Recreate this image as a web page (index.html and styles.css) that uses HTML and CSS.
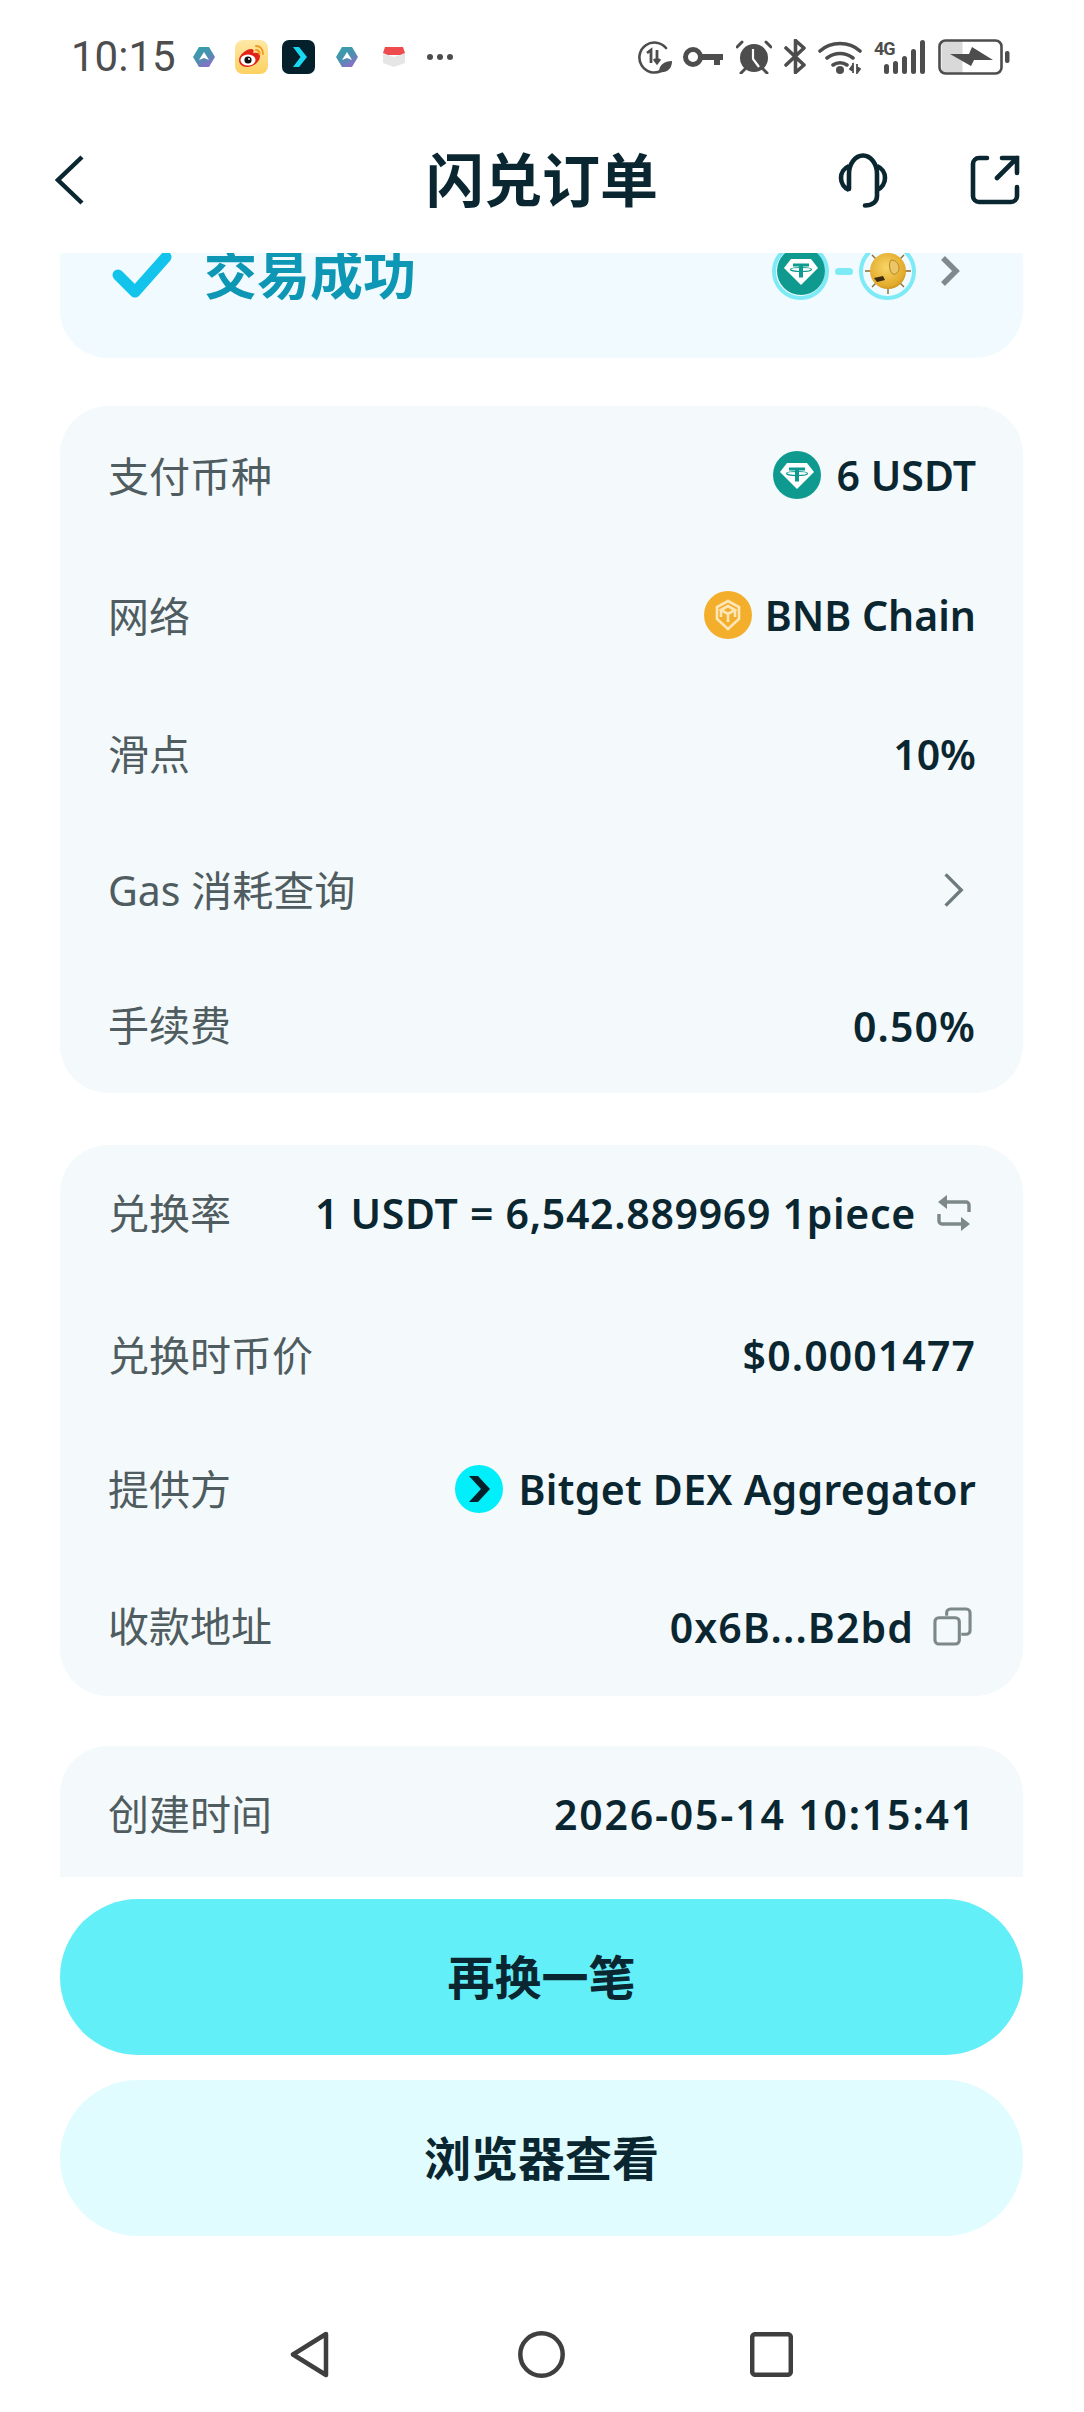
FILE: index.html
```html
<!DOCTYPE html>
<html lang="zh-CN">
<head>
    <meta charset="UTF-8">
    <meta name="viewport" content="width=device-width, initial-scale=1.0">
    <title>闪兑订单</title>
    <link rel="stylesheet" href="styles.css">
</head>
<body>

    <div class="app">

        <!-- Status bar -->
        <div class="status-bar">
            <span class="time">10:15</span>
            <svg class="s-hex" viewBox="0 0 22 20">
                <defs>
                    <linearGradient id="hexFill" x1="0" y1="0" x2="0.6" y2="1">
                        <stop offset="0" stop-color="#2fa3a8"/>
                        <stop offset="0.6" stop-color="#4d8fb0"/>
                        <stop offset="1" stop-color="#8b6fc8"/>
                    </linearGradient>
                </defs>
                <path d="M6 0h10l6 10-6 10H6L0 10z" fill="url(#hexFill)"/>
                <path d="M11 5l5 8-5-2-5 2z" fill="#fff"/>
            </svg>
            <svg class="s-app s-weibo" viewBox="0 0 33 34">
                <defs>
                    <linearGradient id="weiboBg" x1="0" y1="0" x2="0" y2="1">
                        <stop offset="0" stop-color="#ffe9a8"/>
                        <stop offset="1" stop-color="#fdd060"/>
                    </linearGradient>
                </defs>
                <rect width="33" height="34" rx="8" fill="url(#weiboBg)"/>
                <path d="M4 20c0-5 7-11 12-11 3 0 3 2 2 4 4-1 7 0 7 3 0 6-7 11-13 11-5 0-8-3-8-7z" fill="#e2231a"/>
                <ellipse cx="13" cy="20" rx="7.500" ry="5.500" fill="#fff"/>
                <circle cx="13" cy="20" r="3.600" fill="#111"/>
                <circle cx="14" cy="19" r="1" fill="#fff"/>
                <path d="M21 6c4 0 7 3 7 8M21 10c2 0 3.500 1.500 3.500 4" fill="none" stroke="#f29a1f" stroke-width="2" stroke-linecap="round"/>
            </svg>
            <svg class="s-app s-bitget" viewBox="0 0 33 34">
                <rect width="33" height="34" rx="7" fill="#04202b"/>
                <path d="M11 7h6l8 10-8 10h-6l7.500-10z" fill="#19d9f2"/>
            </svg>
            <svg class="s-hex s-hex-2" viewBox="0 0 22 20">
                <path d="M6 0h10l6 10-6 10H6L0 10z" fill="url(#hexFill)"/>
                <path d="M11 5l5 8-5-2-5 2z" fill="#fff"/>
            </svg>
            <svg class="s-box" viewBox="0 0 24 21">
                <path d="M1 7l11 4 11-4v10l-11 4-11-4z" fill="#e6e6e6"/>
                <path d="M3 1h18l2 6-5 2H6L1 7z" fill="#ee4b4f"/>
            </svg>
            <span class="s-dots"><i></i><i></i><i></i></span>

            <div class="status-right">
                <svg class="s-data" viewBox="0 0 35 34">
                    <path d="M29 8a15 15 0 1 0-5 23" fill="none" stroke="#4d4d4d" stroke-width="2.600" stroke-linecap="round"/>
                    <path d="M10 13l4-3v13M20 10v13M17 19l3 4 3-4" fill="none" stroke="#4d4d4d" stroke-width="2.800"/>
                    <path d="M22 32c0-7 5-11 13-11 0 8-5 12-13 11z" fill="#4d4d4d"/>
                </svg>
                <svg class="s-key" viewBox="0 0 40 20">
                    <circle cx="10" cy="10" r="7.500" fill="none" stroke="#4d4d4d" stroke-width="5"/>
                    <path d="M18 7h22v6h-3v5h-6v-5H18z" fill="#4d4d4d"/>
                </svg>
                <svg class="s-alarm" viewBox="0 0 36 34">
                    <circle cx="18" cy="18" r="14" fill="#4d4d4d"/>
                    <path d="M17 9v10l6 8" fill="none" stroke="#fff" stroke-width="2.200"/>
                    <path d="M1 7l5-5M35 7l-5-5M5 33l4-4M31 33l-4-4" stroke="#4d4d4d" stroke-width="3" stroke-linecap="round"/>
                </svg>
                <svg class="s-bt" viewBox="0 0 23 35">
                    <path d="M2 9l18 17-8.500 7.500V1.500L20 9 2 26" fill="none" stroke="#4d4d4d" stroke-width="3.600" stroke-linejoin="round" stroke-linecap="round"/>
                </svg>
                <svg class="s-wifi" viewBox="0 0 44 34">
                    <path d="M2 11c11-10 29-10 40 0M9 18c8-6 18-6 26 0M15 25c4-3 10-3 14 0" fill="none" stroke="#4d4d4d" stroke-width="3.600" stroke-linecap="round"/>
                    <circle cx="22" cy="30" r="4" fill="#4d4d4d"/>
                    <path d="M35 23v10M39 24v9M32 29l3-4v6zM42 29l-3 4v-6z" stroke="#4d4d4d" stroke-width="1.800" fill="#4d4d4d"/>
                </svg>
                <div class="s-signal">
                    <span class="s-4g">4G</span>
                    <i class="bar-1"></i><i class="bar-2"></i><i class="bar-3"></i><i class="bar-4"></i><i class="bar-5"></i>
                </div>
                <svg class="s-battery" viewBox="0 0 72 36">
                    <rect x="3.500" y="2" width="21" height="32" fill="#d9d9d9"/>
                    <rect x="1.500" y="1.500" width="62" height="33" rx="6" fill="none" stroke="#4d4d4d" stroke-width="2.600"/>
                    <path d="M12 15l19 0 3-7 21 13-19 0-3 6z" fill="#4d4d4d"/>
                    <rect x="67" y="12" width="4.500" height="12" rx="2" fill="#4d4d4d"/>
                </svg>
            </div>
        </div>

        <!-- Header -->
        <div class="header">
            <svg class="back-icon" viewBox="0 0 30 50">
                <path d="M27 2L3 25l24 23" fill="none" stroke="#0a2630" stroke-width="4.500"/>
            </svg>
            <h1 class="title">闪兑订单</h1>
            <svg class="head-icon" viewBox="0 0 54 55">
                <path d="M13 36V21a14 18.500 0 0 1 28 0v22c0 6-5 9.500-12 9.500" fill="none" stroke="#0a2630" stroke-width="4.600" stroke-linecap="round"/>
                <path d="M13 13a13 13 0 0 0 0 24M41 13a13 13 0 0 1 0 24" fill="none" stroke="#0a2630" stroke-width="4.600"/>
            </svg>
            <svg class="share-icon" viewBox="0 0 50 50">
                <path d="M17 3H9a6 6 0 0 0-6 6v32a6 6 0 0 0 6 6h32a6 6 0 0 0 6-6v-9" fill="none" stroke="#0a2630" stroke-width="4.600" stroke-linecap="round"/>
                <path d="M27 23L47 3M32 3h15v15" fill="none" stroke="#0a2630" stroke-width="4.600" stroke-linecap="round"/>
            </svg>
        </div>

        <!-- Scroll area -->
        <div class="scroller">
            <div class="card-status">
                <svg class="check-icon" viewBox="0 0 60 60">
                    <path d="M6 30l17 17 31-35" fill="none" stroke="#12c3ec" stroke-width="11" stroke-linecap="round" stroke-linejoin="round"/>
                </svg>
                <span class="status-text">交易成功</span>
                <div class="pair">
                    <div class="ring">
                        <svg class="coin" viewBox="0 0 48 48">
                            <circle cx="24" cy="24" r="24" fill="#0f9a90"/>
                            <path d="M14 12h20l7 9-17 17L7 21z" fill="#fff"/>
                            <path d="M16 16.500h16v3h-6v11h-4v-11h-6z" fill="#0f9a90"/>
                            <ellipse cx="24" cy="22.500" rx="10.500" ry="2" fill="none" stroke="#0f9a90" stroke-width="1.200"/>
                        </svg>
                    </div>
                    <span class="pair-dash"></span>
                    <div class="ring">
                        <svg class="coin" viewBox="0 0 48 48">
                            <defs>
                                <radialGradient id="gold" cx="0.45" cy="0.4" r="0.7">
                                    <stop offset="0" stop-color="#f8d668"/>
                                    <stop offset="0.75" stop-color="#e2aa2a"/>
                                    <stop offset="1" stop-color="#b47c14"/>
                                </radialGradient>
                            </defs>
                            <path d="M24 1v46M1 24h46M8 8l32 32M40 8L8 40" stroke="#8a6a2a" stroke-width="1.400"/>
                            <circle cx="24" cy="24" r="18" fill="url(#gold)"/>
                            <path d="M10 31l9-2 2 4-8 2z" fill="#3a2a10"/>
                            <path d="M27 13c5 0 8 4 8 8s-3 7-6 6-5-10-2-14z" fill="#ecc566" stroke="#a8761c" stroke-width="0.800"/>
                        </svg>
                    </div>
                    <svg class="chev" viewBox="0 0 20 30">
                        <path d="M3 2l13 13L3 28" fill="none" stroke="#808a8c" stroke-width="5.500"/>
                    </svg>
                </div>
            </div>

            <div class="card card-pay">
                <div class="row row-icon">
                    <span class="label">支付币种</span>
                    <span class="value value-up">
                        <svg class="coin" viewBox="0 0 48 48">
                            <circle cx="24" cy="24" r="24" fill="#0f9a90"/>
                            <path d="M14 12h20l7 9-17 17L7 21z" fill="#fff"/>
                            <path d="M16 16.500h16v3h-6v11h-4v-11h-6z" fill="#0f9a90"/>
                            <ellipse cx="24" cy="22.500" rx="10.500" ry="2" fill="none" stroke="#0f9a90" stroke-width="1.200"/>
                        </svg>
                        6 USDT
                    </span>
                </div>
                <div class="row row-icon">
                    <span class="label">网络</span>
                    <span class="value value-up">
                        <svg class="coin coin-bnb" viewBox="0 0 48 48">
                            <circle cx="24" cy="24" r="24" fill="#f3ae2c"/>
                            <g fill="none" stroke="#fde7b8" stroke-width="2.600">
                                <path d="M24 10l11 6v12l-11 10-11-10V16z"/>
                                <path d="M17 19l7-4 7 4-7 4zM24 23v8M17 19v7M31 19v7"/>
                            </g>
                        </svg>
                        BNB Chain
                    </span>
                </div>
                <div class="row">
                    <span class="label">滑点</span>
                    <span class="value">10%</span>
                </div>
                <div class="row">
                    <span class="label">Gas 消耗查询</span>
                    <svg class="chev chev-row" viewBox="0 0 20 30">
                        <path d="M3 2l13 13L3 28" fill="none" stroke="#6d7a7e" stroke-width="2.800"/>
                    </svg>
                </div>
                <div class="row row-last">
                    <span class="label">手续费</span>
                    <span class="value value-num">0.50%</span>
                </div>
            </div>

            <div class="card card-rate">
                <div class="row">
                    <span class="label">兑换率</span>
                    <span class="value value-rate">
                        1 USDT = 6,542.889969 1piece
                        <svg class="swap-icon" viewBox="0 0 36 36">
                            <path d="M9 7h21a3 3 0 0 1 3 3v7M27 29H6a3 3 0 0 1-3-3v-7" fill="none" stroke="#7d888b" stroke-width="3.400"/>
                            <path d="M11 0v14L2 7zM25 22v14l9-7z" fill="#7d888b"/>
                        </svg>
                    </span>
                </div>
                <div class="row row-price">
                    <span class="label">兑换时币价</span>
                    <span class="value value-num">$0.0001477</span>
                </div>
                <div class="row">
                    <span class="label">提供方</span>
                    <span class="value value-name">
                        <svg class="coin" viewBox="0 0 48 48">
                            <circle cx="24" cy="24" r="24" fill="#00effa"/>
                            <path d="M14 11h9l12 13-12 13h-9l12-13z" fill="#04202b"/>
                        </svg>
                        Bitget DEX Aggregator
                    </span>
                </div>
                <div class="row row-addr">
                    <span class="label">收款地址</span>
                    <span class="value value-num">
                        0x6B...B2bd
                        <svg class="copy-icon" viewBox="0 0 40 40">
                            <path d="M14 9V6a4 4 0 0 1 4-4h16a4 4 0 0 1 4 4v18a4 4 0 0 1-4 4h-5" fill="none" stroke="#7d888b" stroke-width="3.200"/>
                            <rect x="2" y="11" width="25" height="27" rx="4" fill="none" stroke="#7d888b" stroke-width="3.200"/>
                        </svg>
                    </span>
                </div>
            </div>

            <div class="card card-time">
                <div class="row">
                    <span class="label">创建时间</span>
                    <span class="value value-date">2026-05-14 10:15:41</span>
                </div>
            </div>
        </div>

        <!-- Buttons -->
        <div class="actions">
            <button class="btn btn-primary">再换一笔</button>
            <button class="btn btn-light">浏览器查看</button>
        </div>

        <!-- Android nav -->
        <div class="nav-bar">
            <svg class="nav-back" viewBox="0 0 40 47">
                <path d="M36 3L3 23.500 36 44z" fill="none" stroke="#3f3f3f" stroke-width="4.500" stroke-linejoin="round"/>
            </svg>
            <svg class="nav-home" viewBox="0 0 47 47">
                <circle cx="23.500" cy="23.500" r="21.200" fill="none" stroke="#3f3f3f" stroke-width="4.500"/>
            </svg>
            <svg class="nav-recent" viewBox="0 0 43 45">
                <rect x="2.200" y="2.200" width="38.600" height="40.600" rx="3" fill="none" stroke="#3f3f3f" stroke-width="4.500"/>
            </svg>
        </div>

    </div>

</body>
</html>
```

FILE: styles.css
```css
/* General Reset */
* {
    margin: 0;
    padding: 0;
    box-sizing: border-box;
    font-family: 'Noto Sans', 'Noto Sans CJK SC', sans-serif;
}

body {
    background: #fff;
    color: #0a2630;
    width: 1084px;
    height: 2412px;
    overflow: hidden;
}

.app {
    display: flex;
    flex-direction: column;
    height: 2412px;
}

/* Status bar */
.status-bar {
    height: 110px;
    padding: 3px 74px 0 71px;
    display: flex;
    align-items: center;
    flex-shrink: 0;
}

.time {
    font-family: 'Roboto', sans-serif;
    font-size: 42px;
    color: #4d4d4d;
    width: 122px;
}

.s-hex {
    width: 22px;
    height: 20px;
}

.s-app {
    width: 33px;
    height: 34px;
}

.s-weibo {
    margin-left: 20px;
}

.s-bitget {
    margin-left: 14px;
}

.s-hex-2 {
    margin-left: 21px;
}

.s-box {
    width: 24px;
    height: 21px;
    margin-left: 24px;
}

.s-dots {
    display: flex;
    gap: 4px;
    margin-left: 21px;
}

.s-dots i {
    width: 6px;
    height: 6px;
    border-radius: 50%;
    background: #4d4d4d;
}

.status-right {
    margin-left: auto;
    display: flex;
    align-items: center;
}

.s-data {
    width: 35px;
    height: 34px;
}

.s-key {
    width: 40px;
    height: 20px;
    margin-left: 11px;
}

.s-alarm {
    width: 36px;
    height: 34px;
    margin-left: 13px;
}

.s-bt {
    width: 23px;
    height: 35px;
    margin-left: 12px;
}

.s-wifi {
    width: 44px;
    height: 34px;
    margin-left: 11px;
}

.s-signal {
    width: 51px;
    height: 34px;
    margin-left: 12px;
    position: relative;
    display: flex;
    align-items: flex-end;
    justify-content: flex-end;
    gap: 4px;
}

.s-signal i {
    width: 5px;
    border-radius: 3px;
    background: #4d4d4d;
}

.s-4g {
    position: absolute;
    left: 0;
    top: -2px;
    font-family: 'Roboto', sans-serif;
    font-size: 18px;
    font-weight: 700;
    letter-spacing: -1px;
    color: #4d4d4d;
}

.bar-1 { height: 10px; }
.bar-2 { height: 13px; }
.bar-3 { height: 18px; }
.bar-4 { height: 25px; }
.bar-5 { height: 34px; }

.s-battery {
    width: 72px;
    height: 36px;
    margin-left: 13px;
}

/* Header */
.header {
    height: 143px;
    padding: 0 64px 3px 55px;
    display: flex;
    align-items: center;
    position: relative;
    flex-shrink: 0;
}

.back-icon {
    width: 30px;
    height: 50px;
}

.title {
    position: absolute;
    left: 0;
    right: 0;
    top: 32px;
    text-align: center;
    font-size: 58px;
    font-weight: 700;
    line-height: 76px;
}

.head-icon {
    width: 54px;
    height: 55px;
    margin-left: auto;
}

.share-icon {
    width: 50px;
    height: 50px;
    margin-left: 80px;
}

/* Scroll area */
.scroller {
    height: 1624px;
    padding: 0 61px 0 60px;
    overflow: hidden;
    flex-shrink: 0;
}

.card-status {
    margin-top: -40px;
    height: 145px;
    padding: 0 63px 21px 52px;
    display: flex;
    align-items: center;
    background: #f1fbff;
    border-radius: 48px;
}

.check-icon {
    width: 60px;
    height: 60px;
}

.status-text {
    margin-left: 32px;
    padding-bottom: 6px;
    font-size: 53px;
    font-weight: 700;
    color: #0e97b4;
}

.pair {
    margin-left: auto;
    display: flex;
    align-items: center;
    padding-bottom: 8px;
}

.ring {
    width: 57px;
    height: 57px;
    border: 4px solid #7eeaf6;
    border-radius: 50%;
    display: flex;
    align-items: center;
    justify-content: center;
    flex-shrink: 0;
}

.pair-dash {
    width: 18px;
    height: 7px;
    margin: 0 6px;
    border-radius: 4px;
    background: #7eeaf6;
}

.pair .chev {
    margin-left: 24px;
}

.card {
    background: #f4f9fb;
    border-radius: 48px;
}

.card-pay {
    margin-top: 48px;
}

.card-rate {
    margin-top: 52px;
}

.card-time {
    margin-top: 50px;
    padding-bottom: 80px;
}

.row {
    height: 136px;
    padding: 0 47px 0 48px;
    display: flex;
    align-items: center;
    justify-content: space-between;
}

.row-icon {
    height: 140px;
}

.row-last {
    height: 135px;
}

.row-price {
    height: 140px;
    padding-top: 8px;
}

.row-addr {
    height: 139px;
}

.label {
    padding-bottom: 5px;
    font-size: 41px;
    color: #4f5c60;
}

.value {
    display: flex;
    align-items: center;
    font-size: 41px;
    font-weight: 600;
    color: #0a2630;
    white-space: nowrap;
}

/* digits in the reference font run wider than Noto's */
.value-num {
    letter-spacing: 1.1px;
}

.value-rate {
    letter-spacing: 0.7px;
}

.value-name {
    letter-spacing: 0.3px;
}

.value-date {
    letter-spacing: 1.8px;
}

.value-up {
    padding-bottom: 3px;
}

.coin {
    width: 48px;
    height: 48px;
    margin-right: 16px;
    flex-shrink: 0;
}

.coin-bnb {
    margin-right: 13px;
}

.ring .coin {
    margin-right: 0;
}

.chev {
    width: 20px;
    height: 30px;
}

.chev-row {
    width: 24px;
    height: 36px;
    margin-right: 10px;
}

.swap-icon {
    width: 36px;
    height: 36px;
    margin: 0 4px 0 20px;
}

.copy-icon {
    width: 39px;
    height: 39px;
    margin: 0 4px 0 19px;
}

/* Buttons */
.actions {
    padding: 22px 61px 0 60px;
    display: flex;
    flex-direction: column;
    gap: 25px;
}

.btn {
    height: 156px;
    border: none;
    border-radius: 78px;
    padding-bottom: 5px;
    font-size: 47px;
    font-weight: 700;
    color: #0a2630;
}

.btn-primary {
    background: #63eff8;
}

.btn-light {
    background: #e0fcff;
}

/* Android nav */
.nav-bar {
    margin-top: 95px;
    padding-left: 290px;
    display: flex;
    align-items: center;
}

.nav-back {
    width: 40px;
    height: 47px;
}

.nav-home {
    width: 47px;
    height: 47px;
    margin-left: 188px;
}

.nav-recent {
    width: 43px;
    height: 45px;
    margin-left: 185px;
}
```
